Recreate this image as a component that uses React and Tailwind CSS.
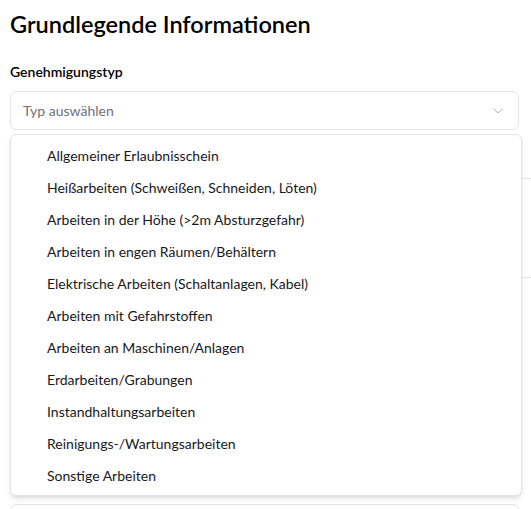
import React from "react";

const options = [
  "Allgemeiner Erlaubnisschein",
  "Heißarbeiten (Schweißen, Schneiden, Löten)",
  "Arbeiten in der Höhe (>2m Absturzgefahr)",
  "Arbeiten in engen Räumen/Behältern",
  "Elektrische Arbeiten (Schaltanlagen, Kabel)",
  "Arbeiten mit Gefahrstoffen",
  "Arbeiten an Maschinen/Anlagen",
  "Erdarbeiten/Grabungen",
  "Instandhaltungsarbeiten",
  "Reinigungs-/Wartungsarbeiten",
  "Sonstige Arbeiten",
];

const ChevronDown = () => (
  <svg width="16" height="16" viewBox="0 0 24 24" fill="none" stroke="currentColor" strokeWidth="1.5" strokeLinecap="round" strokeLinejoin="round">
    <path d="m6 9 6 6 6-6" />
  </svg>
);

export default function App() {
  return (
    <div
      className="relative h-[509px] overflow-hidden bg-white px-2.5 pt-2 text-[#111]"
      style={{ fontFamily: 'Lato, "Noto Sans", sans-serif' }}
    >
      <h1 className="text-[23.5px] font-semibold leading-8 text-black">Grundlegende Informationen</h1>

      <div className="mt-[22px]">
        <label className="block text-[14px] font-semibold leading-5 text-black">Genehmigungstyp</label>
        <div className="relative mt-[9px] w-[509px]">
          <button className="flex h-[39px] w-full items-center justify-between rounded-md border border-[#e4e4e7] bg-white pl-3 pr-3 text-[14px] text-[#71717a]">
            <span>Typ auswählen</span>
            <span className="text-[#b4b4bb]">
              <ChevronDown />
            </span>
          </button>

          {/* content behind the open list */}
          <div className="mt-[48px] w-[540px] border-t border-[#e4e4e7]" />
          <div className="mt-[98px] w-[540px] border-t border-[#e4e4e7]" />
          <div className="mt-[226px] h-10 w-full rounded-md border border-[#e4e4e7]" />

          <div className="absolute left-0 top-[43px] z-10 w-[512px] rounded-md border border-[#e4e4e7] bg-white py-1 shadow-md">
            {options.map((opt) => (
              <div key={opt} className="flex h-8 items-center pl-[36px] text-[14px] text-[#18181b]">
                {opt}
              </div>
            ))}
          </div>
        </div>
      </div>
    </div>
  );
}
